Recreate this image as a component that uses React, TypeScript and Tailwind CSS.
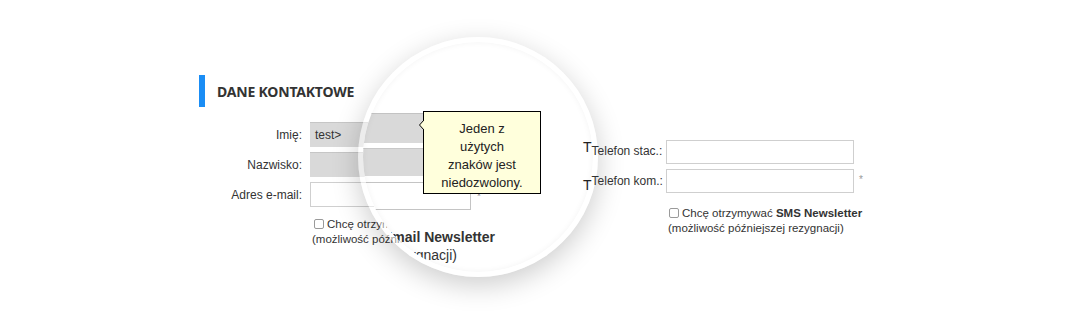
import type { ReactNode } from "react";

function Checkbox() {
  return (
    <span className="mr-[3px] inline-block h-[10px] w-[10px] rounded-[2px] border border-[#9a9a9a] bg-white align-[-1px]" />
  );
}

function LeftRow({ label, children }: { label: string; children: ReactNode }) {
  return (
    <div className="flex h-[25px] items-center">
      <label className="w-[104px] pr-[1px] text-right">{label}</label>
      <div className="ml-[7px]">{children}</div>
    </div>
  );
}

function PhoneRow({
  label,
  tTop,
  labelTop,
  star,
}: {
  label: string;
  tTop: string;
  labelTop: string;
  star?: boolean;
}) {
  return (
    <div className="flex h-[24px] items-start">
      <div className="relative z-10 flex w-[83px] items-start">
        <span className={`text-[14px] leading-none text-[#222] ${tTop}`}>T</span>
        <span className={`text-[12px] leading-none ${labelTop}`}>{label}</span>
      </div>
      <div className="h-[24px] w-[188px] border border-[#cfcfcf] bg-white" />
      {star ? <span className="ml-[5px] mt-[6px] text-[10px] leading-none text-[#999]">*</span> : null}
    </div>
  );
}

// lens: 240px circle at (358,37); magnified area inset 5px
function Magnifier() {
  return (
    <div className="absolute left-[358px] top-[37px] h-[240px] w-[240px] rounded-full bg-white/50 shadow-[0_8px_28px_rgba(0,0,0,0.2)]">
      <div className="absolute inset-[5px] overflow-hidden rounded-full bg-white">
        <div className="absolute left-0 top-[71px] h-[30px] w-[108px] border-t border-[#c3c3c3] bg-[#d9d9d9]" />
        <div className="absolute left-0 top-[106px] h-[28px] w-[108px] border-t border-[#c8c8c8] bg-[#d9d9d9]" />
        <div className="absolute left-[-1px] top-[140px] h-[28px] w-[109px] border border-[#c4c4c4] bg-white" />
        <span className="absolute left-[114px] top-[150px] text-[10px] leading-none text-[#888]">*</span>
        <div className="absolute right-[98px] top-[186px] whitespace-nowrap text-[14px] leading-[18px] text-[#333]">
          Chcę otrzymywać <b>Email Newsletter</b>
        </div>
        <div className="absolute right-[136px] top-[204px] whitespace-nowrap text-[14px] leading-[18px] text-[#333]">
          (możliwość późniejszej rezygnacji)
        </div>
        <div className="absolute inset-0 rounded-full shadow-[inset_0_0_6px_rgba(0,0,0,0.05)]" />
      </div>
    </div>
  );
}

function Tooltip() {
  return (
    <div className="absolute left-[423px] top-[111px] h-[83px] w-[118px] border border-black bg-[#ffffdc] pt-[8px] text-center text-[13px] leading-[18px] text-[#222]">
      <svg className="absolute left-[-5px] top-[8px]" width="5" height="10" viewBox="0 0 5 10">
        <polygon points="5,0 0.5,5 5,10" fill="#ffffdc" />
        <polyline points="5,0 0.5,5 5,10" fill="none" stroke="#000" strokeWidth="1" />
      </svg>
      Jeden z
      <br />
      użytych
      <br />
      znaków jest
      <br />
      niedozwolony.
    </div>
  );
}

export default function App() {
  return (
    <div className="relative h-[334px] w-[1071px] overflow-hidden bg-white font-['Liberation_Sans',Arial,sans-serif] text-[12px] text-[#333]">
      <div className="flex pl-[199px] pt-[75px]">
        <div className="w-[384px]">
          <div className="flex h-[32px] items-center">
            <div className="h-full w-[6px] bg-[#1a8df5]" />
            <h2 className="ml-[12px] font-['Noto_Sans',sans-serif] text-[14px] font-bold tracking-[-0.2px] text-[#333]">
              DANE KONTAKTOWE
            </h2>
          </div>
          <div className="mt-[15px] flex flex-col gap-[5px]">
            <LeftRow label="Imię:">
              <div className="h-[25px] w-[160px] border-t border-[#c6c6c6] bg-[#d9d9d9] pl-[5px] leading-[24px]">test&gt;</div>
            </LeftRow>
            <LeftRow label="Nazwisko:">
              <div className="h-[25px] w-[160px] border-t border-[#c6c6c6] bg-[#d9d9d9]" />
            </LeftRow>
            <LeftRow label="Adres e-mail:">
              <div className="h-[25px] w-[160px] border border-[#cfcfcf] bg-white" />
            </LeftRow>
          </div>
          <div className="ml-[113px] mt-[10px] text-[11.5px] leading-[15px]">
            <div className="pl-[2px]">
              <Checkbox />
              Chcę otrzymywać <b>Email Newsletter</b>
            </div>
            <div>(możliwość późniejszej rezygnacji)</div>
          </div>
        </div>
        <div className="pt-[65px]">
          <div className="flex flex-col gap-[5px]">
            <PhoneRow label="Telefon stac.:" tTop="mt-0" labelTop="mt-[5px]" />
            <PhoneRow label="Telefon kom.:" tTop="mt-[9px]" labelTop="mt-[6px]" star />
          </div>
          <div className="ml-[85px] mt-[13px] text-[11.5px] leading-[15px]">
            <div className="pl-[1px]">
              <Checkbox />
              Chcę otrzymywać <b>SMS Newsletter</b>
            </div>
            <div>(możliwość późniejszej rezygnacji)</div>
          </div>
        </div>
      </div>
      <Magnifier />
      <Tooltip />
    </div>
  );
}
